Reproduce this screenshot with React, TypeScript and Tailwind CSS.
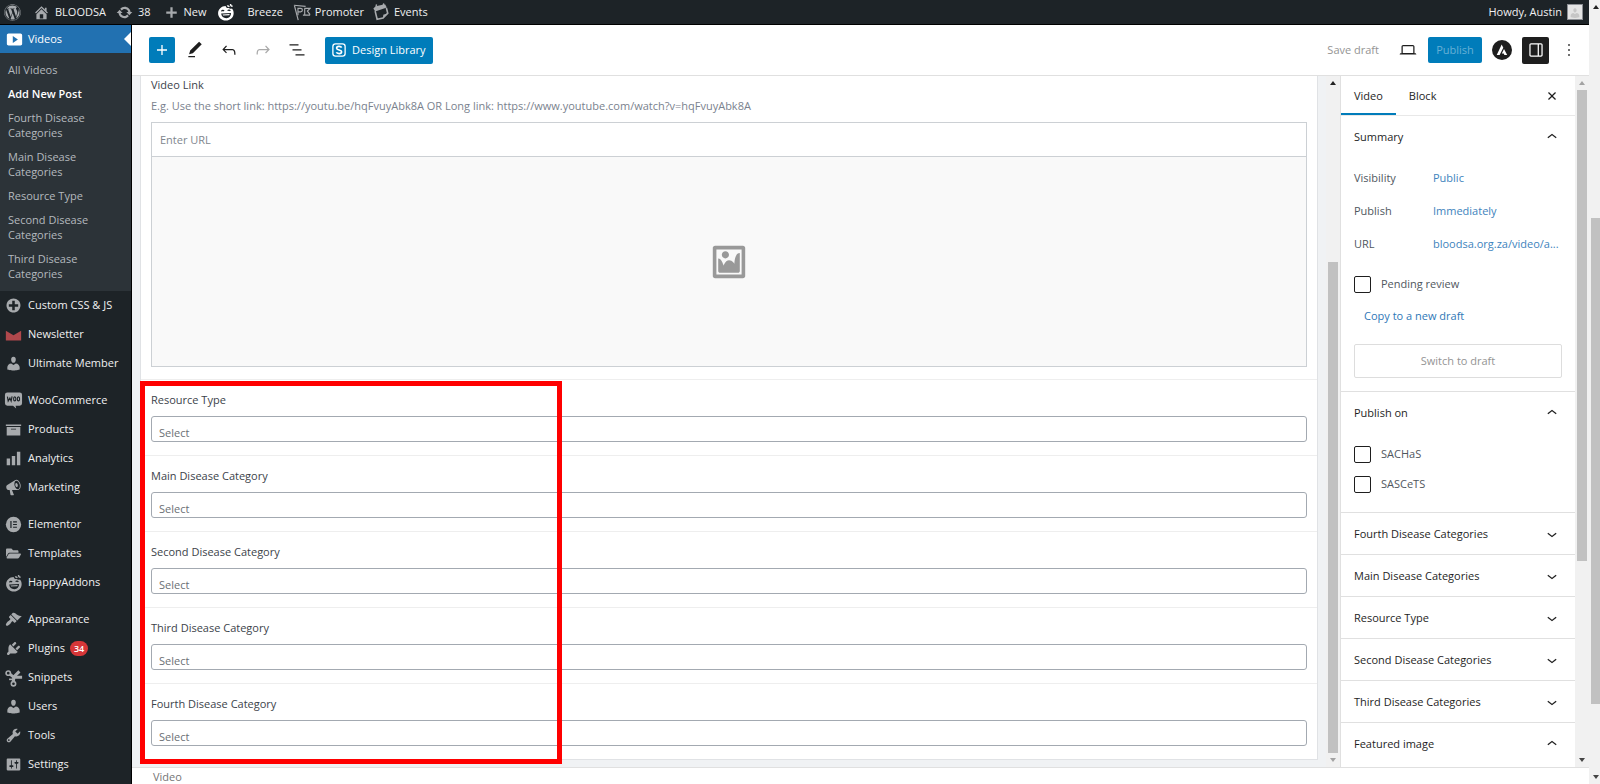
import React, { useState } from 'react';
import { FaWordpress, FaFolderOpen } from 'react-icons/fa';

const dash = {
  home: 'M16 8.5l1.53 1.53-1.06 1.06L10 4.6l-6.47 6.49-1.06-1.06L10 2.5l4 4v-2h2v4zm-6-2.46l6 5.99V18H4v-5.97zM12 17v-5H8v5h4z',
  update: 'M10.2 3.28c3.53 0 6.43 2.61 6.92 6h2.08l-3.5 4-3.5-4h2.32c-.45-1.97-2.21-3.45-4.32-3.45-1.45 0-2.73.71-3.54 1.78L4.95 5.66C6.23 4.2 8.11 3.28 10.2 3.28zm-.4 13.44c-3.52 0-6.43-2.61-6.92-6H.8l3.5-4c1.17 1.33 2.33 2.67 3.5 4H5.48c.45 1.97 2.21 3.45 4.32 3.45 1.45 0 2.73-.71 3.54-1.78l1.71 1.95c-1.28 1.46-3.15 2.38-5.25 2.38z',
  plus: 'M17 8.5v3h-5.5V17h-3v-5.5H3v-3h5.5V3h3v5.5H17z',
  video: 'M19 15V5c0-1.1-.9-2-2-2H3c-1.1 0-2 .9-2 2v10c0 1.1.9 2 2 2h14c1.1 0 2-.9 2-2zM8 14V6l6 4z',
  plusAlt: 'M15.8 4.2c3.2 3.21 3.2 8.39 0 11.6-3.21 3.2-8.39 3.2-11.6 0C1 12.59 1 7.41 4.2 4.2 7.41 1 12.59 1 15.8 4.2zm-4.3 11.3v-4h4v-3h-4v-4h-3v4h-4v3h4v4h3z',
  user: 'M10 9.25c-2.27 0-2.73-3.44-2.73-3.44C7 4.02 7.82 2 9.97 2c2.16 0 2.98 2.02 2.71 3.81 0 0-.41 3.44-2.68 3.44zm0 2.57L12.72 10c2.39 0 4.52 2.33 4.52 4.53v2.49s-3.65 1.13-7.24 1.13c-3.65 0-7.24-1.13-7.24-1.13v-2.49c0-2.25 1.94-4.48 4.47-4.48z',
  archive: 'M19 4v2H1V4h18zM2 7h16v10H2V7zm11 3V9H7v1h6z',
  chart: 'M18 18V2h-4v16h4zm-6 0V7H8v11h4zm-6 0v-8H2v8h4z',
  megaphone: 'M18.15 5.94c.46 1.62.38 3.22-.02 4.48-.42 1.28-1.26 2.18-2.3 2.48-.16.06-.26.06-.4.06-.06.02-.12.02-.18.02-.06.02-.14.02-.22.02h-6.8l2.22 5.5c.02.14-.06.26-.14.34-.08.1-.24.16-.34.16H6.95c-.1 0-.26-.06-.34-.16-.08-.08-.16-.2-.14-.34l-1-5.5H4.25l-.02-.02c-.5.06-1.08-.18-1.54-.62s-.88-1.08-1.06-1.88c-.24-.8-.2-1.56-.02-2.2.18-.62.58-1.08 1.06-1.3l.02-.02 9-5.4c.1-.06.18-.1.24-.16.06-.04.14-.08.24-.12.16-.08.28-.12.5-.18 1.04-.3 2.24.1 3.22.98s1.84 2.24 2.26 3.86zm-2.58 5.98h-.02c.4-.1.74-.34 1.04-.7.58-.7.86-1.76.86-3.04 0-.64-.1-1.3-.28-1.98-.34-1.36-1.02-2.5-1.78-3.24s-1.68-1.1-2.46-.88c-.82.22-1.4.96-1.7 2-.32 1.04-.28 2.36.06 3.72.38 1.36 1 2.5 1.8 3.24.78.74 1.62 1.1 2.48.88zm-2.54-7.08c.22-.04.42-.02.62.04.38.16.76.48 1.02 1s.42 1.2.42 1.78c0 .3-.04.56-.12.8-.18.48-.44.84-.86.94-.34.1-.8-.06-1.14-.4s-.64-.86-.78-1.5c-.18-.62-.12-1.24.02-1.72s.48-.84.82-.94z',
  appearance: 'M14.48 11.06L7.41 3.99l1.5-1.5c.5-.56 2.3-.47 3.51.32 1.21.8 1.43 1.28 2.91 2.1 1.18.64 2.45 1.26 4.45.85zm-.71.71L6.7 4.7 4.93 6.47c-.39.39-.39 1.02 0 1.41l1.06 1.06c.39.39.39 1.03 0 1.42-.6.6-1.43 1.11-2.21 1.69-.35.26-.7.53-1.01.84C1.43 14.23.4 16.08 1.4 17.07c.99 1 2.84-.03 4.18-1.36.31-.31.58-.66.85-1.02.57-.78 1.08-1.61 1.69-2.21.39-.39 1.02-.39 1.41 0l1.06 1.06c.39.39 1.02.39 1.41 0z',
  plugins: 'M13.11 4.36L9.87 7.6 8 5.73l3.24-3.24c.35-.34 1.05-.2 1.56.32.52.51.66 1.21.31 1.55zm-8 1.77l.91-1.12 9.01 9.01-1.19.84c-.71.71-2.63 1.16-3.82 1.16H6.14L4.9 17.26c-.59.59-1.54.59-2.12 0-.59-.58-.59-1.53 0-2.12l1.24-1.24v-3.88c0-1.13.4-3.19 1.09-3.89zm7.26 3.97l3.24-3.24c.34-.35 1.04-.21 1.55.31.52.51.66 1.21.31 1.55l-3.24 3.25z',
  tools: 'M16.68 9.77c-1.34 1.34-3.3 1.67-4.95.99l-5.41 6.52c-.99.99-2.59.99-3.58 0s-.99-2.59 0-3.57l6.52-5.42c-.68-1.65-.35-3.61.99-4.95 1.28-1.28 3.12-1.62 4.72-1.06l-2.89 2.89 2.82 2.82 2.86-2.87c.53 1.58.18 3.39-1.08 4.65zM3.81 16.21c.4.39 1.04.39 1.43 0 .4-.4.4-1.04 0-1.43-.39-.4-1.03-.4-1.43 0-.39.39-.39 1.03 0 1.43z',
  settings: 'M18 16V4c0-.55-.45-1-1-1H3c-.55 0-1 .45-1 1v12c0 .55.45 1 1 1h14c.55 0 1-.45 1-1zM8 11h1c.55 0 1 .45 1 1s-.45 1-1 1H8v1.5c0 .28-.22.5-.5.5s-.5-.22-.5-.5V13H6c-.55 0-1-.45-1-1s.45-1 1-1h1V5.5c0-.28.22-.5.5-.5s.5.22.5.5V11zm5-2h-1c-.55 0-1-.45-1-1s.45-1 1-1h1V5.5c0-.28.22-.5.5-.5s.5.22.5.5V7h1c.55 0 1 .45 1 1s-.45 1-1 1h-1v5.5c0 .28-.22.5-.5.5s-.5-.22-.5-.5V9z',
  image: 'M2.25 1h15.5c.69 0 1.25.56 1.25 1.25v15.5c0 .69-.56 1.25-1.25 1.25H2.25C1.56 19 1 18.44 1 17.75V2.25C1 1.56 1.56 1 2.25 1zM17 17V3H3v14h14zM10 6c0-1.1-.9-2-2-2s-2 .9-2 2 .9 2 2 2 2-.9 2-2zm3 5s0-6 3-6v10c0 .55-.45 1-1 1H5c-.55 0-1-.45-1-1V8c2 0 3 4 3 4s1-3 3-3 3 2 3 2z',
};

const wp = {
  plus: 'M18 11.2h-5.2V6h-1.6v5.2H6v1.6h5.2V18h1.6v-5.2H18z',
  edit: 'M20.1 5.1L16.9 2 6.2 12.7l-1.3 4.4 4.5-1.3L20.1 5.1zM4 20.8h8v-1.5H4v1.5z',
  undo: 'M18.3 11.7c-.6-.6-1.4-.9-2.3-.9H6.7l2.9-3.3-1.1-1-4.5 5L8.5 16l1-1-2.7-2.7H16c.5 0 .9.2 1.3.5 1 1 1 3.4 1 4.5v.3h1.5v-.2c0-1.5 0-4.3-1.5-5.7z',
  redo: 'M15.6 6.5l-1.1 1 2.9 3.3H8c-.9 0-1.7.3-2.3.9-1.4 1.5-1.4 4.2-1.4 5.6v.2h1.5v-.3c0-1.1 0-3.5 1-4.5.3-.3.7-.5 1.3-.5h9.2L14.5 15l1.1 1.1 4.6-4.6-4.6-5z',
  list: 'M13.8 5.2H3v1.5h10.8V5.2zm-3.6 12v1.5H21v-1.5H10.2zm7.2-6H6.6v1.5h10.8v-1.5z',
  laptop: 'M20.5 16h-.7V8c0-1.1-.9-2-2-2H6.2c-1.1 0-2 .9-2 2v8h-.7c-.8 0-1.5.7-1.5 1.5h20c0-.8-.7-1.5-1.5-1.5zM5.7 8c0-.3.2-.5.5-.5h11.6c.3 0 .5.2.5.5v7.6H5.7V8z',
  drawer: 'M18 4H6c-1.1 0-2 .9-2 2v12c0 1.1.9 2 2 2h12c1.1 0 2-.9 2-2V6c0-1.1-.9-2-2-2zm-4 14.5H6c-.3 0-.5-.2-.5-.5V6c0-.3.2-.5.5-.5h8v13zm4.5-.5c0 .3-.2.5-.5.5h-2.5v-13H18c.3 0 .5.2.5.5v12z',
  more: 'M13 19h-2v-2h2v2zm0-6h-2v-2h2v2zm0-6h-2V5h2v2z',
  close: 'M12 13.06l3.712 3.713 1.061-1.06L13.061 12l3.712-3.712-1.06-1.06L12 10.938 8.288 7.227l-1.061 1.06L10.939 12l-3.712 3.712 1.06 1.061L12 13.061z',
  up: 'M6.5 12.4L12 8l5.5 4.4-.9 1.2L12 10l-4.5 3.6-1-1.2z',
  down: 'M17.5 11.6L12 16l-5.5-4.4.9-1.2L12 14l4.5-3.6 1 1.2z',
};

function Dashicon({ d, className = 'size-[17px]' }: { d: string; className?: string }) {
  return (
    <svg viewBox="0 0 20 20" fill="currentColor" className={className}>
      <path fillRule="evenodd" d={d} />
    </svg>
  );
}

function WpIcon({ d, className = 'size-5' }: { d: string; className?: string }) {
  return (
    <svg viewBox="0 0 24 24" fill="currentColor" className={className}>
      <path d={d} />
    </svg>
  );
}

function HappyIcon() {
  return (
    <svg viewBox="0 0 20 20" fill="none" className="size-[18px]">
      <path
        fill="currentColor"
        d="M9.6 3.2C5 3.2 1.2 6.8 1.2 11.3S5 19.4 9.8 19.4s8.7-3.5 8.7-8.1c0-2-.7-3.7-1.9-5.1-1.5.6-3 .2-3.8-1-1 .5-2.6.3-3.2-2z"
      />
      <path d="M11.5 2.6c.5 1 1.4 1.3 2.3.8M15 1c0 1.5.8 2.5 2.3 2.6" stroke="currentColor" strokeWidth="1.5" />
      <path d="M5 9.2c.8-1.1 2-1.2 2.9-.4M11.8 8.5c1-1 2.3-.8 3 .2" stroke="#1d2327" strokeWidth="1.4" />
      <path fill="#1d2327" d="M4.6 11.8l11-.8c.1 3.4-2 5.7-5.1 5.9-3.2.1-5.5-1.7-5.9-5.1z" />
      <path fill="currentColor" d="M6.2 12.7l7.9-.6-.4 1.4-7 .5z" />
    </svg>
  );
}

function NewsletterIcon() {
  return (
    <svg viewBox="0 0 20 20" className="size-[17px]">
      <path fill="#b0484c" d="M1 5.5l9 5.5 9-5.5V17H1z" />
    </svg>
  );
}

function WooIcon() {
  return (
    <svg viewBox="0 0 20 20" className="size-[19px]">
      <path fill="currentColor" d="M3.5 1.5h13A2.5 2.5 0 0119 4v9a2.5 2.5 0 01-2.5 2.5h-4.3l.6 3-3.3-3h-6A2.5 2.5 0 011 13V4a2.5 2.5 0 012.5-2.5z" />
      <path d="M3.6 6l.8 4.6 1.8-3.1 1.3 3.1 1-4.9" fill="none" stroke="#1d2327" strokeWidth="1.2" />
      <ellipse cx="11.3" cy="8.3" rx="1.2" ry="2.1" fill="none" stroke="#1d2327" strokeWidth="1.2" />
      <ellipse cx="15.2" cy="8.3" rx="1.2" ry="2.1" fill="none" stroke="#1d2327" strokeWidth="1.2" />
    </svg>
  );
}

function ElementorIcon() {
  return (
    <svg viewBox="0 0 20 20" className="size-[17px]">
      <circle cx="10" cy="10" r="9" fill="currentColor" />
      <path d="M7 6v8M9.5 6.8h4.5M9.5 10h4.5M9.5 13.2h4.5" stroke="#1d2327" strokeWidth="1.4" />
    </svg>
  );
}

function SnippetsIcon() {
  return (
    <svg viewBox="0 0 20 20" fill="none" stroke="currentColor" className="size-[18px]">
      <circle cx="3.6" cy="4.6" r="2.4" strokeWidth="1.8" />
      <circle cx="9.4" cy="16.4" r="2.4" strokeWidth="1.8" />
      <path d="M5.8 6l4 3.2h9.2" strokeWidth="3.2" />
      <path d="M9.2 14l.8-5.500 6-5.800" strokeWidth="3.4" />
      <path d="M4.5 11.5h5" strokeWidth="1.8" />
    </svg>
  );
}

function PromoterIcon() {
  return (
    <svg viewBox="0 0 20 20" fill="none" stroke="currentColor" strokeWidth="1.3" className="size-[18px]">
      <path d="M1 2.5l13 1.2M1.5 2.5L5.8 19" />
      <path d="M5.5 13.500V6h3c2.600 0 2.600 3.800 0 3.800h-3M11 13.500h8M12.500 6H19l-3 3 3 4M13 6v7" />
    </svg>
  );
}

// ring-bound calendar leaf, tilted
function EventsIcon() {
  return (
    <svg viewBox="0 0 20 20" fill="none" className="size-[18px]">
      <path fill="currentColor" d="M1.5 6l2.5-2.5 10.5-2 2 3.5-13 4.5z" />
      <path d="M3.5 9l2.2 9 6.500-1.200 5.300-5.300-1.500-6" stroke="currentColor" strokeWidth="1.8" />
      <path fill="currentColor" d="M12.2 17.5l.3-4.5 5-1.5z" />
      <path d="M4.5 4l.5-2.5M12.5 2.5L13 .5" stroke="currentColor" strokeWidth="1.5" />
    </svg>
  );
}

interface MenuItem {
  label: string;
  icon: React.ReactNode;
  badge?: number;
}

const menuGroups: MenuItem[][] = [
  [
    { label: 'Custom CSS & JS', icon: <Dashicon d={dash.plusAlt} /> },
    { label: 'Newsletter', icon: <NewsletterIcon /> },
    { label: 'Ultimate Member', icon: <Dashicon d={dash.user} /> },
  ],
  [
    { label: 'WooCommerce', icon: <WooIcon /> },
    { label: 'Products', icon: <Dashicon d={dash.archive} /> },
    { label: 'Analytics', icon: <Dashicon d={dash.chart} /> },
    { label: 'Marketing', icon: <Dashicon d={dash.megaphone} /> },
  ],
  [
    { label: 'Elementor', icon: <ElementorIcon /> },
    { label: 'Templates', icon: <FaFolderOpen className="size-[15px]" /> },
    { label: 'HappyAddons', icon: <HappyIcon /> },
  ],
  [
    { label: 'Appearance', icon: <Dashicon d={dash.appearance} /> },
    { label: 'Plugins', icon: <Dashicon d={dash.plugins} />, badge: 34 },
    { label: 'Snippets', icon: <SnippetsIcon /> },
    { label: 'Users', icon: <Dashicon d={dash.user} /> },
    { label: 'Tools', icon: <Dashicon d={dash.tools} /> },
    { label: 'Settings', icon: <Dashicon d={dash.settings} /> },
    { label: '', icon: <Dashicon d={dash.settings} /> },
  ],
];

const videoSubmenu = [
  'All Videos',
  'Add New Post',
  'Fourth Disease Categories',
  'Main Disease Categories',
  'Resource Type',
  'Second Disease Categories',
  'Third Disease Categories',
];

const taxonomyFields = [
  'Resource Type',
  'Main Disease Category',
  'Second Disease Category',
  'Third Disease Category',
  'Fourth Disease Category',
];

const closedPanels = [
  'Fourth Disease Categories',
  'Main Disease Categories',
  'Resource Type',
  'Second Disease Categories',
  'Third Disease Categories',
];

function AdminBar() {
  return (
    <header className="flex h-[25px] shrink-0 items-center border-b border-black bg-[#1d2327] pr-[6px] pl-1 text-[11px] text-[#f0f0f1]">
      <a href="#" className="text-[#a7aaad]" aria-label="About WordPress"><FaWordpress className="size-[17px]" /></a>
      <a href="#" className="ml-3 flex items-center gap-[5px]">
        <Dashicon d={dash.home} className="size-[17px] text-[#a7aaad]" />
        BLOODSA
      </a>
      <a href="#" className="ml-[10px] flex items-center gap-[5px]">
        <Dashicon d={dash.update} className="size-[17px] text-[#a7aaad]" />
        38
      </a>
      <a href="#" className="ml-[13px] flex items-center gap-[5px]">
        <Dashicon d={dash.plus} className="size-[15px] text-[#a7aaad]" />
        New
      </a>
      <a href="#" className="ml-[10px] text-white" aria-label="Happy Addons"><HappyIcon /></a>
      <a href="#" className="ml-[13px]">Breeze</a>
      <a href="#" className="ml-[10px] flex items-center gap-1">
        <span className="text-[#a7aaad]"><PromoterIcon /></span>
        Promoter
      </a>
      <a href="#" className="ml-2 flex items-center gap-1">
        <span className="text-[#a7aaad]"><EventsIcon /></span>
        Events
      </a>
      <a href="#" className="ml-auto flex items-center gap-[5px]">
        Howdy, Austin
        <span className="flex size-4 items-end justify-center border border-[#8c8f94] bg-[#e4e4e4] text-[#c6c6c6]">
          <Dashicon d={dash.user} className="size-3" />
        </span>
      </a>
    </header>
  );
}

function Sidebar() {
  return (
    <nav className="w-[132px] shrink-0 overflow-hidden border-r border-black bg-[#1d2327] text-[11px] font-medium text-[#f0f0f1]">
      <a href="#" className="relative flex h-7 items-center bg-[#2271b1] pl-[5px] text-white">
        <span className="flex w-[18px] justify-center"><Dashicon d={dash.video} /></span>
        <span className="ml-[5px]">Videos</span>
        <span className="absolute top-[7px] right-0 border-y-[7px] border-r-[7px] border-y-transparent border-r-white" />
      </a>
      <ul className="flex flex-col gap-px bg-[#2c3338] pt-[5px] pb-[6px] leading-[15px] font-normal text-[#b4b9be]">
        {videoSubmenu.map((item) => (
          <li key={item}>
            <a
              href="#"
              className={`block py-1 pr-8 pl-2 ${item === 'Add New Post' ? 'font-semibold whitespace-nowrap text-white' : ''}`}
            >
              {item}
            </a>
          </li>
        ))}
      </ul>
      <div className="flex flex-col gap-2">
        {menuGroups.map((group, i) => (
          <ul key={i}>
            {group.map((item) => (
              <li key={item.label}>
                <a href="#" className="flex h-[29px] items-center pl-1 whitespace-nowrap">
                  <span className="flex w-[19px] justify-center text-[#a7aaad]">{item.icon}</span>
                  <span className="ml-[5px]">{item.label}</span>
                  {item.badge && (
                    <span className="ml-[5px] rounded-full bg-[#d63638] px-1 text-[9px] leading-[15px] font-semibold text-white">
                      {item.badge}
                    </span>
                  )}
                </a>
              </li>
            ))}
          </ul>
        ))}
      </div>
    </nav>
  );
}

function EditorHeader() {
  return (
    <div className="flex h-[51px] shrink-0 items-center border-b border-[#e0e0e0] bg-white pr-[10px] pl-[17px] text-[11px] text-[#1e1e1e]">
      <button aria-label="Toggle block inserter" className="flex size-[26px] items-center justify-center rounded-xs bg-[#007cba] text-white">
        <WpIcon d={wp.plus} />
      </button>
      <div className="ml-[10px] flex items-center gap-[14px]">
        <button aria-label="Tools"><WpIcon d={wp.edit} /></button>
        <button aria-label="Undo"><WpIcon d={wp.undo} /></button>
        <button aria-label="Redo" className="text-[#aaaaaa]"><WpIcon d={wp.redo} /></button>
        <button aria-label="Document overview"><WpIcon d={wp.list} /></button>
      </div>
      <button className="ml-[18px] flex h-[27px] items-center gap-[6px] rounded-xs bg-[#007cba] px-[7px] font-medium text-white">
        <svg viewBox="0 0 16 16" fill="none" stroke="currentColor" className="size-[14px]">
          <rect x="1" y="1" width="14" height="14" rx="3" strokeWidth="1.5" />
          <path d="M11 5.2C10.2 3.5 5.3 3.3 5.3 5.9c0 2.7 5.7 1.5 5.7 4.2 0 2.7-5.2 2.4-6 .5" strokeWidth="1.9" />
        </svg>
        Design Library
      </button>
      <div className="ml-auto flex items-center">
        <button className="text-[#949494]">Save draft</button>
        <button aria-label="Preview" className="ml-[19px]"><WpIcon d={wp.laptop} /></button>
        <button className="ml-[10px] h-[26px] w-[54px] rounded-xs bg-[#007cba] text-[#66b0d6]">Publish</button>
        <button aria-label="Astra settings" className="ml-[10px]">
          <svg viewBox="0 0 20 20" className="size-5">
            <circle cx="10" cy="10" r="10" fill="#1e1e1e" />
            <path fill="#fff" d="M9.7 4.5l1.6 3.2-3.7 7.3H4.7zM12 9l3.2 6h-2.8l-.7-1.4H9.800z" />
          </svg>
        </button>
        <button aria-label="Settings" className="ml-[10px] flex size-[27px] items-center justify-center rounded-xs bg-[#1e1e1e] text-white">
          <WpIcon d={wp.drawer} />
        </button>
        <button aria-label="Options" className="ml-[10px]"><WpIcon d={wp.more} /></button>
      </div>
    </div>
  );
}

// thumb sits between the two arrow buttons, grow values give its share of the track
function Scrollbar({ before, thumb, after, narrow = false, upMuted = false, downMuted = false }: {
  before: number;
  thumb: number;
  after: number;
  narrow?: boolean;
  upMuted?: boolean;
  downMuted?: boolean;
}) {
  return (
    <div className={`flex shrink-0 flex-col items-center bg-[#f1f1f1] ${narrow ? 'w-[11px] pl-[2px]' : 'w-[14px]'}`}>
      <span className={`my-[5px] border-x-[3px] border-b-[4px] border-x-transparent ${upMuted ? 'border-b-[#a3a3a3]' : 'border-b-[#222222]'}`} />
      <span style={{ flexGrow: before }} />
      <span className={`bg-[#c1c1c1] ${narrow ? 'w-full' : 'w-[10px]'}`} style={{ flexGrow: thumb }} />
      <span style={{ flexGrow: after }} />
      <span className={`my-[5px] border-x-[3px] border-t-[4px] border-x-transparent ${downMuted ? 'border-t-[#a3a3a3]' : 'border-t-[#444444]'}`} />
    </div>
  );
}

function FieldsMetabox() {
  return (
    <div className="relative flex min-w-0 grow flex-col overflow-hidden bg-[#f0f2f4] px-2 pb-2">
      <div className="border-x border-b border-[#e0e2e5] bg-white text-[11px] text-[#3c434a]">
        <div className="px-[10px] pb-3">
          <label htmlFor="video-url" className="block pt-px leading-4 font-medium">Video Link</label>
          <p className="mt-1 leading-[18px] text-[#7a828e]">
            E.g. Use the short link: https://youtu.be/hqFvuyAbk8A OR Long link: https://www.youtube.com/watch?v=hqFvuyAbk8A
          </p>
          <div className="mt-[7px] border border-[#ccd0d4]">
            <input
              id="video-url"
              type="url"
              placeholder="Enter URL"
              className="block h-[34px] w-full border-b border-[#ccd0d4] bg-white px-2 outline-none placeholder:text-[#80868e]"
            />
            <div className="flex h-[209px] items-center justify-center bg-[#f9f9f9] text-[#999999]">
              <Dashicon d={dash.image} className="size-9" />
            </div>
          </div>
        </div>
        {taxonomyFields.map((field) => (
          <div key={field} className="h-[76px] border-t border-[#eeeeee] px-[10px] pt-[11px]">
            <label htmlFor={field} className="block leading-[18px] font-medium">{field}</label>
            <select
              id={field}
              className="mt-[7px] block h-[26px] w-full appearance-none rounded-[3px] border border-[#a3a9b1] bg-white px-[7px] pt-2 text-[#6b6f75]"
            >
              <option>Select</option>
            </select>
          </div>
        ))}
      </div>
      <div className="pointer-events-none absolute bottom-[3px] left-2 h-[383px] w-[422px] border-[5px] border-[#ff0000]" />
    </div>
  );
}

function PanelTitle({ title, open = false }: { title: string; open?: boolean }) {
  return (
    <button className="flex h-[41px] w-full items-center justify-between px-[13px] font-medium text-[#1e1e1e]" aria-expanded={open}>
      <span className="pt-px">{title}</span>
      <WpIcon d={open ? wp.up : wp.down} />
    </button>
  );
}

function CheckRow({ label }: { label: string }) {
  return (
    <label className="flex h-[30px] items-center gap-[10px] px-[13px]">
      <input type="checkbox" className="size-[17px] appearance-none rounded-xs border border-[#1e1e1e] bg-white" />
      {label}
    </label>
  );
}

function SettingsPanel() {
  const [tab, setTab] = useState('Video');
  const summary = [
    ['Visibility', 'Public'],
    ['Publish', 'Immediately'],
    ['URL', 'bloodsa.org.za/video/a...'],
  ];

  return (
    <aside className="w-[235px] shrink-0 overflow-hidden border-l border-[#e0e0e0] bg-white text-[11px] text-[#50575e]">
      <div className="flex h-10 items-stretch border-b border-[#e8e8e8] pr-[13px] text-[#1e1e1e]">
        {['Video', 'Block'].map((name) => (
          <button
            key={name}
            onClick={() => setTab(name)}
            className={`border-b-2 px-[13px] pt-1 font-medium ${tab === name ? 'border-[#007cba]' : 'border-transparent'}`}
          >
            {name}
          </button>
        ))}
        <button aria-label="Close settings" className="ml-auto"><WpIcon d={wp.close} /></button>
      </div>
      <PanelTitle title="Summary" open />
      <dl className="pt-[5px]">
        {summary.map(([name, value]) => (
          <div key={name} className="flex h-[33px] items-center pl-[13px]">
            <dt className="w-[79px]">{name}</dt>
            <dd><a href="#" className="text-[#4083bd]">{value}</a></dd>
          </div>
        ))}
      </dl>
      <div className="mt-2">
        <CheckRow label="Pending review" />
      </div>
      <a href="#" className="mt-2 ml-[23px] block leading-[18px] text-[#2f78b7]">Copy to a new draft</a>
      <div className="mt-[19px] px-[13px] pb-[13px]">
        <button className="h-[34px] w-full rounded-xs border border-[#dddddd] text-[#949494]">Switch to draft</button>
      </div>
      <section className="border-t border-[#e0e0e0] pb-[13px]">
        <PanelTitle title="Publish on" open />
        <div className="pt-[6px]">
          <CheckRow label="SACHaS" />
          <CheckRow label="SASCeTS" />
        </div>
      </section>
      {closedPanels.map((title) => (
        <section key={title} className="border-t border-[#e0e0e0]">
          <PanelTitle title={title} />
        </section>
      ))}
      <section className="border-t border-[#e0e0e0]">
        <PanelTitle title="Featured image" open />
      </section>
    </aside>
  );
}

export default function App() {
  return (
    <div className="flex h-screen overflow-hidden bg-white font-['Open_Sans',sans-serif]">
      <div className="flex min-w-0 grow flex-col">
        <AdminBar />
        <div className="flex min-h-0 grow">
          <Sidebar />
          <main className="flex min-w-0 grow flex-col">
            <EditorHeader />
            <div className="flex min-h-0 grow">
              <FieldsMetabox />
              <Scrollbar before={172} thumb={491} after={0} downMuted />
              <SettingsPanel />
              <Scrollbar before={0} thumb={471} after={192} upMuted />
            </div>
            <footer className="h-[17px] shrink-0 border-t border-[#e0e0e0] bg-white pt-px pl-[21px] text-[11px] leading-[15px] text-[#757575]">
              Video
            </footer>
          </main>
        </div>
      </div>
      <Scrollbar before={204} thumb={486} after={66} narrow />
    </div>
  );
}
